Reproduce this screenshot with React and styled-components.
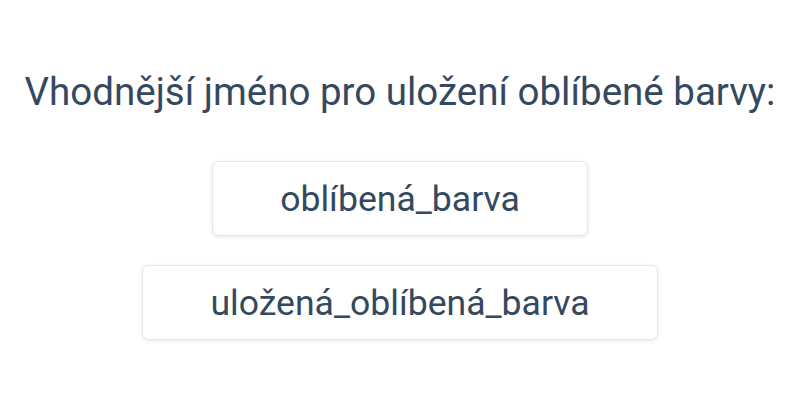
import React from 'react';
import styled, { createGlobalStyle } from 'styled-components';

const GlobalStyle = createGlobalStyle`
  body {
    margin: 0;
    background: #ffffff;
    font-family: Roboto, "Noto Sans", sans-serif;
    color: #34495e;
  }
`;

const Page = styled.div`
  width: 800px;
  height: 400px;
  display: flex;
  flex-direction: column;
  align-items: center;
  padding-top: 68px;
  box-sizing: border-box;
`;

const Question = styled.h2`
  margin: 0 0 45px;
  font-size: 38.5px;
  font-weight: 400;
  line-height: 48px;
  white-space: nowrap;
`;

const Options = styled.div`
  display: flex;
  flex-direction: column;
  align-items: center;
  gap: 29px;
`;

const Option = styled.button`
  height: 75px;
  padding: 0 67px;
  border: 1px solid #e4e6e8;
  border-radius: 7px;
  background: #fff;
  box-shadow: 0 1px 4px rgba(0, 0, 0, 0.1);
  font-family: Roboto, "Noto Sans", sans-serif;
  font-size: 35.6px;
  color: #34495e;
  cursor: pointer;
`;

const answers = ['oblíbená_barva', 'uložená_oblíbená_barva'];

export default function App() {
  return (
    <>
      <GlobalStyle />
      <Page>
        <Question>Vhodnější jméno pro uložení oblíbené barvy:</Question>
        <Options>
          {answers.map((a) => (
            <Option key={a}>{a}</Option>
          ))}
        </Options>
      </Page>
    </>
  );
}
